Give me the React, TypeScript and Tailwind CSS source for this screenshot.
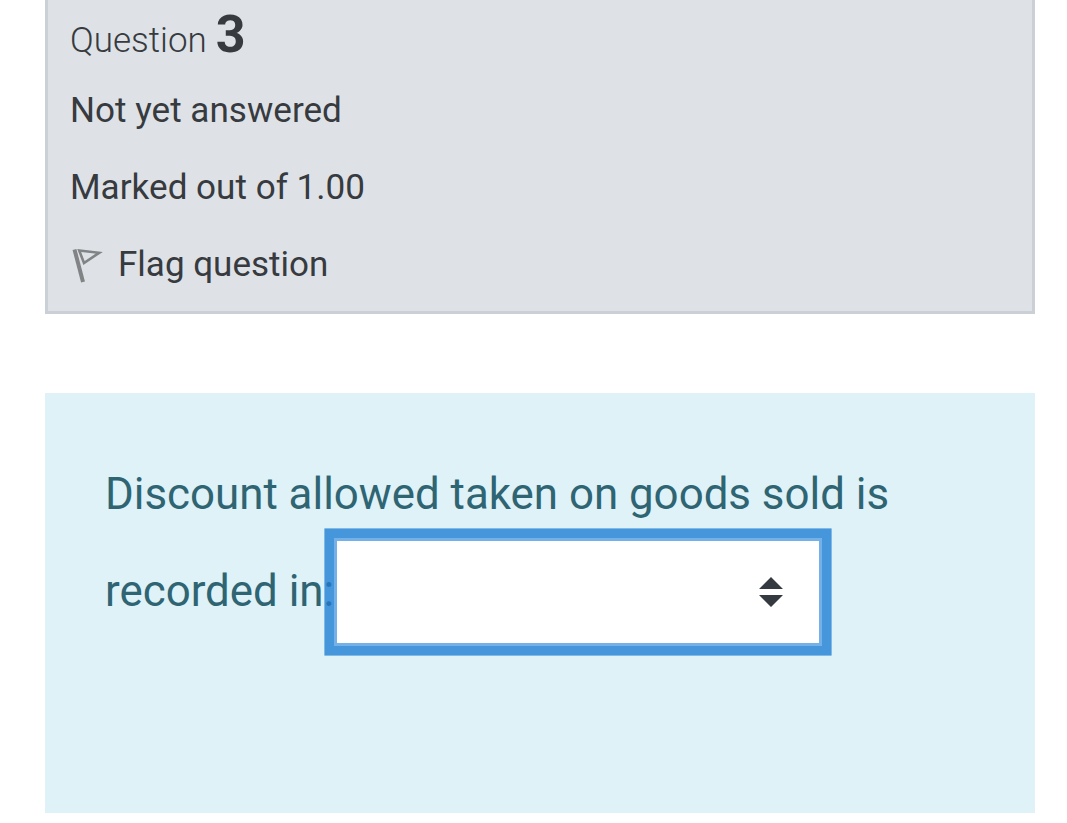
export default function App() {
  return (
    <main className="flex h-[823px] w-[1067px] flex-col overflow-hidden bg-white pl-[45px] font-[Roboto,sans-serif]">
      <section className="h-[314px] w-[990px] shrink-0 border-[3px] border-t-0 border-[#cad0d5] bg-[#dee2e6] pl-[22px] text-[#373a3f]">
        <h1 className="h-[72px] pt-[3px] text-[35px] font-light leading-[64px] whitespace-nowrap">
          Question <span className="ml-[0.5px] text-[52px] font-bold">3</span>
        </h1>
        <p className="h-[77px] text-[35.1px] leading-[77px]">Not yet answered</p>
        <p className="h-[77px] text-[35.1px] leading-[77px]">Marked out of 1.00</p>
        <div className="flex h-[77px] items-center pt-px text-[35px]">
          <svg className="mr-[12px] h-[36px] w-[36px]" viewBox="0 0 36 36" fill="none" stroke="#818385">
            <path d="M4.5 2.5L13 35" strokeWidth="4" />
            <path d="M9.2 3.5L29.2 5.8L14 16Z" strokeWidth="2.6" />
          </svg>
          <span>Flag question</span>
        </div>
      </section>
      <section className="mt-[79px] h-[420px] w-[990px] shrink-0 bg-[#def2f8] pt-[53px] pl-[60px] text-[43.85px] text-[#2f6473]">
        <p className="h-[97px] leading-[97px] whitespace-nowrap">Discount allowed taken on goods sold is</p>
        <div className="flex h-[97px] items-center">
          <label htmlFor="answer" className="relative z-10 w-[229px] shrink-0 pt-px whitespace-nowrap">
            recorded in<span className="text-[#2675b8]">:</span>
          </label>
          <button
            id="answer"
            aria-label="Answer"
            className="flex h-[108px] w-[488px] shrink-0 items-center justify-end border-[3px] border-[#74b1e9] bg-white pr-[36px] shadow-[0_0_0_9.6px_#4696dc]"
          >
            <svg className="h-[30px] w-[24px]" viewBox="0 0 24 30" fill="#343a40">
              <path d="M0 12L12 0L24 12ZM0 18H24L12 30Z" />
            </svg>
          </button>
        </div>
      </section>
    </main>
  );
}
